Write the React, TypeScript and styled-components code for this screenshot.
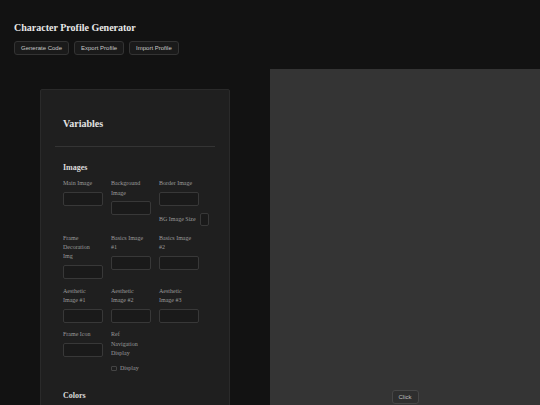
import React from 'react';
import styled, { createGlobalStyle } from 'styled-components';

const GlobalStyle = createGlobalStyle`
  body {
    margin: 0;
    background-color: #121212;
    color: #e6e6e6;
    font-family: "Liberation Serif", "Times New Roman", serif;
  }
`;

const Header = styled.header`
  padding: 22px 14px 0;
`;

const Title = styled.h1`
  margin: 0;
  font-size: 10px;
  line-height: 11.5px;
  font-weight: bold;
  color: #e8e8e8;
`;

const Toolbar = styled.div`
  display: flex;
  gap: 5px;
  margin-top: 7px;
`;

const Button = styled.button`
  height: 14px;
  padding: 0 6px;
  font-family: "Liberation Sans", Arial, sans-serif;
  font-size: 6px;
  color: #c8c8c8;
  background-color: #1a1a1a;
  border: 1px solid #333;
  border-radius: 3px;
`;

const Main = styled.main`
  display: flex;
  margin-top: 14px;
`;

const Sidebar = styled.div`
  width: 270px;
  flex-shrink: 0;
  box-sizing: border-box;
  padding: 20px 40px;
`;

const Panel = styled.div`
  background-color: #1f1f1f;
  border: 1px solid #2a2a2a;
  border-radius: 2px;
  padding: 28px 14px 20px;
`;

const PanelTitle = styled.h2`
  margin: 0 8px;
  font-size: 10px;
  line-height: 11.5px;
  font-weight: bold;
  color: #e4e4e4;
`;

const Divider = styled.div`
  height: 1px;
  margin-top: 17px;
  background-color: #343434;
`;

const Section = styled.section`
  display: flow-root;
  padding: 0 8px;
`;

const SectionTitle = styled.h3`
  margin: 15.5px 0 7.5px;
  font-size: 8px;
  line-height: 9.2px;
  font-weight: bold;
  color: #dcdcdc;
`;

const Grid = styled.div`
  display: grid;
  grid-template-columns: repeat(3, 36px);
  column-gap: 12px;
  row-gap: 7.5px;
  align-items: start;
  margin-bottom: 3px;
`;

const Field = styled.div`
  display: flex;
  flex-direction: column;
`;

const Label = styled.label<{ inline?: boolean }>`
  display: block;
  font-size: 6px;
  line-height: 9.3px;
  color: #9a9a9a;
  margin-bottom: ${p => (p.inline ? '0' : '3.5px')};
  white-space: ${p => (p.inline ? 'nowrap' : 'normal')};
`;

const TextBox = styled.input`
  width: 40px;
  height: 14px;
  box-sizing: border-box;
  padding: 0;
  background-color: #1a1a1a;
  border: 1px solid #383838;
  border-radius: 2px;
`;

const SizeBox = styled.input`
  width: 9px;
  height: 13px;
  flex-shrink: 0;
  box-sizing: border-box;
  padding: 0;
  background-color: #1a1a1a;
  border: 1px solid #383838;
  border-radius: 2px;
`;

const InlineRow = styled.div`
  display: flex;
  align-items: center;
  gap: 4px;
  margin-top: 7.3px;
`;

const CheckRow = styled.div`
  display: flex;
  align-items: center;
  gap: 3.5px;
  margin-top: 2px;
`;

const Check = styled.input`
  appearance: none;
  width: 5.5px;
  height: 5.5px;
  margin: 0;
  box-sizing: border-box;
  border: 1px solid #444;
  border-radius: 1px;
  background-color: transparent;
`;

const Preview = styled.div`
  flex: 1;
  display: flex;
  flex-direction: column;
  align-items: center;
  background-color: #343434;
`;

const Stage = styled.div`
  align-self: stretch;
  height: 321px;
`;

const ClickButton = styled(Button)`
  background-color: #2e2e2e;
  border-color: #464646;
  color: #bdbdbd;
`;

const imageFields = [
  'Main Image',
  'Background Image',
  'Border Image',
  'Frame Decoration Img',
  'Basics Image #1',
  'Basics Image #2',
  'Aesthetic Image #1',
  'Aesthetic Image #2',
  'Aesthetic Image #3',
  'Frame Icon',
];

export default function App() {
  return (
    <>
      <GlobalStyle />
      <Header>
        <Title>Character Profile Generator</Title>
        <Toolbar>
          <Button>Generate Code</Button>
          <Button>Export Profile</Button>
          <Button>Import Profile</Button>
        </Toolbar>
      </Header>
      <Main>
        <Sidebar>
          <Panel>
            <PanelTitle>Variables</PanelTitle>
            <Divider />
            <Section>
              <SectionTitle>Images</SectionTitle>
              <Grid>
                {imageFields.map(name => (
                  <Field key={name}>
                    <Label>{name}</Label>
                    <TextBox type="text" />
                    {name === 'Border Image' && (
                      <InlineRow>
                        <Label inline>BG Image Size</Label>
                        <SizeBox type="text" />
                      </InlineRow>
                    )}
                  </Field>
                ))}
                <Field>
                  <Label>Ref Navigation Display</Label>
                  <CheckRow>
                    <Check type="checkbox" />
                    <Label inline>Display</Label>
                  </CheckRow>
                </Field>
              </Grid>
            </Section>
            <Section>
              <SectionTitle>Colors</SectionTitle>
            </Section>
          </Panel>
        </Sidebar>
        <Preview>
          <Stage />
          <ClickButton>Click</ClickButton>
        </Preview>
      </Main>
    </>
  );
}
